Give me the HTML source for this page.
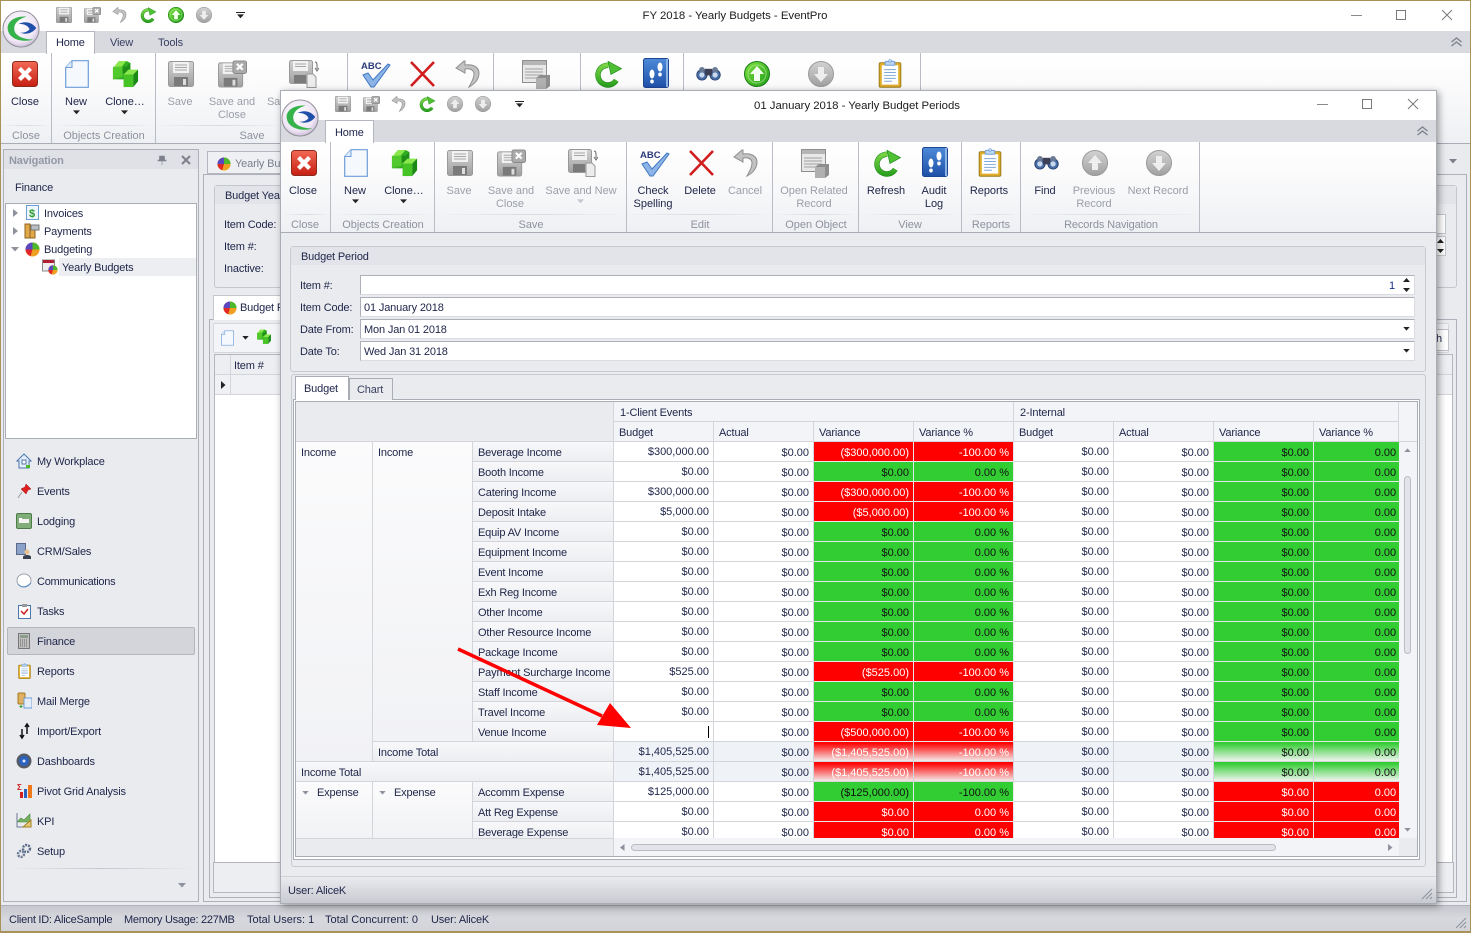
<!DOCTYPE html>
<html><head><meta charset="utf-8"><title>EventPro</title>
<style>
html,body{margin:0;padding:0}
body{width:1471px;height:933px;overflow:hidden;position:relative;background:#e9ebef;font:11px/14px "Liberation Sans",sans-serif;color:#1e2448;letter-spacing:-.15px}
div,svg{position:absolute;box-sizing:border-box}
.t{white-space:nowrap;margin-top:1px}
.c{white-space:nowrap;transform:translateX(-50%);text-align:center;margin-top:1px;letter-spacing:-.03px}
.d{color:#9b9ea9}
.g{color:#8e929e}
.sep{width:1px;background:#b9bcc5}
.rib{background:linear-gradient(#fff 0,#fbfbfc 35%,#eef0f3 100%);border-bottom:1px solid #a9adb6}
.strip{background:#d8dae0}
.box{background:#fff;border:1px solid #adb0b9;border-bottom-color:#dadce1;border-right-color:#dadce1}
.shade{height:1px;background:linear-gradient(90deg,#eef0f3,#d8dae0,#eef0f3)}
table{border-collapse:separate;border-spacing:0;table-layout:fixed;width:1118px;position:absolute;left:0;top:0}
td{height:20px;padding:3px 4px 0;box-sizing:border-box;border-right:1px solid #d3d5da;border-bottom:1px solid #d3d5da;text-align:right;background:#fff;white-space:nowrap;overflow:hidden;line-height:16px;color:#1e2448;letter-spacing:0;vertical-align:top}
td.l{text-align:left;padding-left:5px;background:linear-gradient(#f8f8fa,#eceef1);letter-spacing:-.17px}
td.big{text-align:left;padding-left:5px;background:linear-gradient(#fbfbfc,#f1f2f5);letter-spacing:-.17px}
td.n{line-height:17px;padding-top:2px}
td.s{background:#eff3f8}
td.G{background:#32cd32;color:#111;border-color:#e6e8ec}
td.R{background:#f00;color:#fff;border-color:#e6e8ec}
td.GT{background:linear-gradient(#32cd32 5%,#f0f4f0 100%);color:#111}
td.RT{background:linear-gradient(#f00 5%,#f4eaea 100%);color:#fff}
.hd{background:#f3f4f7;border-right:1px solid #d3d5da;border-bottom:1px solid #d3d5da;padding:4px 0 0 5px;white-space:nowrap}
</style></head><body>
<svg width="0" height="0" style="left:0;top:0"><defs>
<linearGradient id="rg" x1="0" y1="0" x2="0" y2="1"><stop offset="0" stop-color="#f26a55"/><stop offset="1" stop-color="#c61e12"/></linearGradient>
<linearGradient id="gg" x1="0" y1="0" x2="1" y2="1"><stop offset="0" stop-color="#7fe23e"/><stop offset="1" stop-color="#1e9e1a"/></linearGradient>
<linearGradient id="rf" gradientUnits="userSpaceOnUse" x1="0" y1="0" x2="0" y2="28"><stop offset="0" stop-color="#8ade4e"/><stop offset="1" stop-color="#259c1c"/></linearGradient>
<linearGradient id="grayg" x1="0" y1="0" x2="0" y2="1"><stop offset="0" stop-color="#d2d2d2"/><stop offset="1" stop-color="#a0a0a0"/></linearGradient>
<linearGradient id="blg" x1="0" y1="0" x2="0" y2="1"><stop offset="0" stop-color="#4d8ad8"/><stop offset="1" stop-color="#1f50a8"/></linearGradient>
<radialGradient id="lg" cx=".45" cy=".4" r=".7"><stop offset="0" stop-color="#fff"/><stop offset=".65" stop-color="#efe6f5"/><stop offset="1" stop-color="#b7a6c8"/></radialGradient>
<symbol id="logo" viewBox="0 0 40 40"><circle cx="20" cy="20" r="19" fill="url(#lg)" stroke="#8a8a90"/><path d="M26 7C14 6 5 12 6 20 7 30 20 35 33 31 24 31 14 28 13 21 12 14 18 9 26 7z" fill="#35b24a"/><path d="M17 15C24 11 32 13 36 19 32 25 25 26 19 24 25 24 28 22 29 20 27 16 22 14 17 15z" fill="#1f4fa8"/></symbol>
<symbol id="close" viewBox="0 0 26 26"><rect x=".5" y=".5" width="25" height="25" rx="3" fill="url(#rg)" stroke="#8e2a1c"/><path d="M7.500 7.500l11 11M18.500 7.500l-11 11" stroke="#fff" stroke-width="4.200" fill="none"/></symbol>
<symbol id="new" viewBox="0 0 24 28"><path d="M7 .7h16.300v26.600H.7V7.500z" fill="#f5f9fe" stroke="#6d9dd6" stroke-width="1.200"/><path d="M7 .7v6.800H.7" fill="#dfeafa" stroke="#6d9dd6"/></symbol>
<symbol id="clone" viewBox="0 0 30 30"><path d="M2 8l7-2 6 2v12H2z" fill="url(#gg)"/><path d="M8 1h8l4 2v11H8z" fill="#2fae21"/><path d="M3 7l5-6h8l-5 6z" fill="#8be84c"/><path d="M11 7h5l4-4v11h-9z" fill="#1f8e18"/><rect x="2" y="7" width="10" height="11" fill="#52c92c"/><rect x="13" y="15" width="10" height="13" fill="#46c426"/><path d="M13 15l5-5h10l-5 5z" fill="#8be84c"/><path d="M23 15l5-5v12l-5 6z" fill="#1b8a15"/></symbol>
<symbol id="save" viewBox="0 0 26 26"><rect x=".5" y=".5" width="25" height="25" rx="2" fill="url(#grayg)" stroke="#999"/><rect x="5" y="1" width="16" height="11" fill="#f2f2f2"/><path d="M7 4h12M7 6.500h12M7 9h12" stroke="#a5a5a5"/><rect x="6" y="16" width="14" height="9" fill="#7a7a7a"/><rect x="15" y="18" width="3" height="6" fill="#ddd"/></symbol>
<symbol id="saveclose" viewBox="0 0 30 28"><rect x=".5" y="2.500" width="25" height="25" rx="2" fill="url(#grayg)" stroke="#999"/><rect x="5" y="3" width="14" height="11" fill="#f2f2f2"/><path d="M7 6h10M7 8.500h10M7 11h10" stroke="#a5a5a5"/><rect x="6" y="18" width="14" height="9" fill="#7a7a7a"/><rect x="15" y="20" width="3" height="6" fill="#ddd"/><rect x="15.500" y=".5" width="14" height="13" rx="2" fill="#aaa" stroke="#888"/><path d="M19.500 3.500l6 6M25.500 3.500l-6 6" stroke="#fff" stroke-width="2.200"/></symbol>
<symbol id="savenew" viewBox="0 0 30 28"><rect x=".5" y=".5" width="23" height="23" rx="2" fill="url(#grayg)" stroke="#999"/><rect x="4" y="1" width="15" height="10" fill="#f2f2f2"/><path d="M6 4h11M6 6.500h11" stroke="#a5a5a5"/><rect x="5" y="15" width="12" height="8" fill="#7a7a7a"/><path d="M18 14h6l3 3v10.500h-9z" fill="#ececec" stroke="#999"/><path d="M26 2c2 0 2 2 2 4v3m-2-1l2 3 2-3" stroke="#666" fill="none"/></symbol>
<symbol id="abc" viewBox="0 0 30 28"><text x="0" y="9" font-family="Liberation Sans" font-weight="700" font-size="9.500" fill="#2a3a78" letter-spacing="0">ABC</text><path d="M2 15l5-2 5 7L27 4l2 1-16 22h-3z" fill="#8db4e6" stroke="#3f78c4"/></symbol>
<symbol id="x" viewBox="0 0 27 26"><path d="M2 1l23 24M25 1L2 25" stroke="#d11d1d" stroke-width="2.600" fill="none"/></symbol>
<symbol id="undo" viewBox="0 0 25 28"><path d="M9 1L1 8l9 5V9c5-1 9 1 9 5 0 5-3 9-5 13 6-3 10-8 10-14 0-6-6-9-14-8V1z" fill="#c2c2c2" stroke="#8f8f8f"/></symbol>
<symbol id="related" viewBox="0 0 28 29"><rect x=".5" y=".5" width="24" height="22" fill="#e8e8e8" stroke="#8f8f8f"/><rect x="1" y="1" width="23" height="4" fill="#b5b5b5"/><path d="M3 9h18M3 12h18M3 15h18M3 18h12" stroke="#a0a0a0"/><path d="M14 18l4-3h10v11l-4 3H14z" fill="#8e8e8e"/><path d="M14 18h10v11H14z" fill="#b0b0b0"/></symbol>
<symbol id="refresh" viewBox="0 0 30 28"><path d="M23 20.500A10.200 10.200 0 1 1 15 5" stroke="#1d8a18" stroke-width="5.600" fill="none"/><path d="M23 20.500A10.200 10.200 0 1 1 15 5" stroke="url(#rf)" stroke-width="4.400" fill="none"/><path d="M14.500 .8L28.500 8.500 17.500 14.500z" fill="#4fc034" stroke="#1d8a18" stroke-width=".7"/></symbol>
<symbol id="audit" viewBox="0 0 26 30"><rect x=".5" y=".5" width="25" height="29" rx="2" fill="url(#blg)" stroke="#1c4694"/><rect x="23" y="1" width="2" height="28" fill="#8db4e6"/><ellipse cx="9" cy="16" rx="2.500" ry="4.500" fill="#fff"/><ellipse cx="9" cy="23.500" rx="1.800" ry="2" fill="#fff"/><ellipse cx="17" cy="9" rx="2.500" ry="4.500" fill="#fff"/><ellipse cx="17" cy="16.500" rx="1.800" ry="2" fill="#fff"/></symbol>
<symbol id="reports" viewBox="0 0 24 30"><rect x=".8" y="3.800" width="22.400" height="25.400" rx="1.500" fill="#e0ac2a" stroke="#9a7a18"/><rect x="3.500" y="6.500" width="17" height="20" fill="#fff"/><path d="M6 11h12M6 14h12M6 17h12M6 20h12M6 23h8" stroke="#7fa6d8"/><rect x="7" y="2.500" width="10" height="4" rx="1" fill="#bcd5f0" stroke="#6d9dd6"/><circle cx="12" cy="2" r="1.500" fill="#bcd5f0" stroke="#6d9dd6" stroke-width=".6"/></symbol>
<symbol id="find" viewBox="0 0 26 16"><circle cx="6" cy="9.500" r="5.500" fill="#4a6fa8" stroke="#27406e"/><circle cx="20" cy="9.500" r="5.500" fill="#4a6fa8" stroke="#27406e"/><circle cx="6" cy="9.500" r="2.800" fill="#c8d9ef"/><circle cx="20" cy="9.500" r="2.800" fill="#c8d9ef"/><rect x="9" y="3" width="8" height="7" fill="#3c3f55"/><circle cx="6" cy="4" r="3" fill="#6a7a94"/><circle cx="20" cy="4" r="3" fill="#6a7a94"/></symbol>
<symbol id="upG" viewBox="0 0 26 26"><circle cx="13" cy="13" r="12.500" fill="url(#grayg)" stroke="#999"/><path d="M13 5l7 8h-4v7h-6v-7H6z" fill="#eee"/></symbol>
<symbol id="downG" viewBox="0 0 26 26"><circle cx="13" cy="13" r="12.500" fill="url(#grayg)" stroke="#999"/><path d="M13 21l7-8h-4V6h-6v7H6z" fill="#eee"/></symbol>
<symbol id="upC" viewBox="0 0 26 26"><circle cx="13" cy="13" r="12.500" fill="url(#gg)" stroke="#1b7a18"/><circle cx="13" cy="13" r="9" fill="none" stroke="#d2f5c0" stroke-opacity=".5"/><path d="M13 5l7 8h-4v7h-6v-7H6z" fill="#f3fff0"/></symbol>
<symbol id="pie" viewBox="0 0 16 16"><circle cx="8" cy="8" r="7.500" fill="#f0a020"/><path d="M8 8V.5a7.500 7.500 0 0 1 7.500 7.500z" fill="#4cb82c"/><path d="M8 8H.5A7.500 7.500 0 0 1 8 .5z" fill="#5a48c0"/><path d="M8 8H.5A7.500 7.500 0 0 0 6 15z" fill="#e02828"/></symbol>
<symbol id="dd" viewBox="0 0 8 5"><path d="M0 0h8L4 4.500z" fill="currentColor"/></symbol>
</defs></svg>

<!-- main window -->
<div style="left:0;top:0;width:1471px;height:933px;border:1px solid #a8925a;border-bottom:2px solid #a8925a;background:#e9ebef"></div>
<div style="left:1px;top:1px;width:1469px;height:30px;background:#fff"></div>
<div class="strip" style="left:1px;top:31px;width:1469px;height:22px"></div>
<div class="rib" style="left:1px;top:53px;width:1469px;height:91px"></div>
<div style="left:46px;top:31px;width:49px;height:23px;background:#fff;border:1px solid #b4b7bf;border-bottom:0"></div>
<div class="t" style="left:56px;top:35px">Home</div>
<div class="t" style="left:110px;top:35px;color:#3a4060">View</div>
<div class="t" style="left:158px;top:35px;color:#3a4060">Tools</div>
<svg style="left:2px;top:10px" width="38" height="38"><use href="#logo"/></svg>
<svg style="left:56px;top:7px" width="16" height="16"><use href="#save"/></svg>
<svg style="left:84px;top:7px" width="17" height="16"><use href="#saveclose"/></svg>
<svg style="left:112px;top:7px" width="15" height="16"><use href="#undo"/></svg>
<svg style="left:140px;top:7px" width="17" height="16"><use href="#refresh"/></svg>
<svg style="left:168px;top:7px" width="16" height="16"><use href="#upC"/></svg>
<svg style="left:196px;top:7px" width="16" height="16"><use href="#downG"/></svg>
<div style="left:236px;top:12px;width:9px;height:1px;background:#222"></div>
<svg style="left:237px;top:14px;color:#222" width="7" height="5"><use href="#dd"/></svg>
<div class="c" style="left:735px;top:8px;font-size:11.4px;color:#1c1c1c">FY 2018 - Yearly Budgets - EventPro</div>
<div style="left:1351px;top:15px;width:11px;height:1px;background:#8a8a8a"></div>
<div style="left:1396px;top:10px;width:10px;height:10px;border:1px solid #7a7a7a"></div>
<svg style="left:1441px;top:9px" width="12" height="12"><path d="M1 1l10 10M11 1L1 11" stroke="#7a7a7a" fill="none"/></svg>
<svg style="left:1450px;top:37px" width="13" height="10"><path d="M1.500 5L6.500 1l5 4M1.500 9l5-4 5 4" stroke="#7d808a" stroke-width="1.300" fill="none"/></svg>
<div class="sep" style="left:51px;top:53px;height:90px"></div>
<div class="sep" style="left:155px;top:53px;height:90px"></div>
<div class="sep" style="left:347px;top:53px;height:37px"></div>
<div class="sep" style="left:493px;top:53px;height:37px"></div>
<div class="sep" style="left:580px;top:53px;height:37px"></div>
<div class="sep" style="left:683px;top:53px;height:37px"></div>
<div class="sep" style="left:920px;top:53px;height:37px"></div>
<svg style="left:12px;top:61px" width="26" height="26"><use href="#close"/></svg>
<svg style="left:65px;top:60px" width="24" height="28"><use href="#new"/></svg>
<svg style="left:111px;top:60px" width="29" height="29"><use href="#clone"/></svg>
<svg style="left:168px;top:61px" width="26" height="26"><use href="#save"/></svg>
<svg style="left:218px;top:60px" width="29" height="28"><use href="#saveclose"/></svg>
<svg style="left:289px;top:60px" width="30" height="28"><use href="#savenew"/></svg>
<svg style="left:361px;top:60px" width="30" height="28"><use href="#abc"/></svg>
<svg style="left:409px;top:61px" width="27" height="26"><use href="#x"/></svg>
<svg style="left:455px;top:60px" width="25" height="28"><use href="#undo"/></svg>
<svg style="left:522px;top:60px" width="28" height="29"><use href="#related"/></svg>
<svg style="left:594px;top:60px" width="29" height="28"><use href="#refresh"/></svg>
<svg style="left:643px;top:58px" width="26" height="30"><use href="#audit"/></svg>
<svg style="left:696px;top:66px" width="25" height="15"><use href="#find"/></svg>
<svg style="left:744px;top:61px" width="26" height="26"><use href="#upC"/></svg>
<svg style="left:808px;top:61px" width="26" height="26"><use href="#downG"/></svg>
<svg style="left:878px;top:59px" width="24" height="29"><use href="#reports"/></svg>
<div class="c" style="left:25px;top:94px">Close</div>
<div class="c" style="left:76px;top:94px">New</div>
<svg style="left:73px;top:110px;color:#222" width="7" height="5"><use href="#dd"/></svg>
<div class="c" style="left:125px;top:94px">Clone…</div>
<svg style="left:121px;top:110px;color:#222" width="7" height="5"><use href="#dd"/></svg>
<div class="c d" style="left:180px;top:94px">Save</div>
<div class="c d" style="left:232px;top:94px">Save and</div>
<div class="c d" style="left:232px;top:107px">Close</div>
<div class="t d" style="left:267px;top:94px">Sa</div>
<div class="c g" style="left:26px;top:128px">Close</div>
<div class="c g" style="left:104px;top:128px">Objects Creation</div>
<div class="c g" style="left:252px;top:128px">Save</div>
<div class="shade" style="left:5px;top:125px;width:42px"></div>
<div class="shade" style="left:60px;top:125px;width:90px"></div>
<div class="shade" style="left:160px;top:125px;width:118px"></div>

<!-- navigation -->
<div style="left:3px;top:149px;width:196px;height:753px;border:1px solid #aeb1ba;background:#e9ebef"></div>
<div style="left:4px;top:150px;width:194px;height:19px;background:#dfe1e6"></div>
<div class="t" style="left:9px;top:153px;font-weight:700;color:#9498a5">Navigation</div>
<svg style="left:157px;top:155px" width="10" height="10"><path d="M2.500 1h5v4h1.500v1H1V5h1.500zM5 6v4" fill="#7d808a" stroke="#7d808a" stroke-width=".6"/></svg>
<svg style="left:181px;top:155px" width="10" height="10"><path d="M1 1l8 8M9 1L1 9" stroke="#7d808a" stroke-width="2" fill="none"/></svg>
<div class="t" style="left:15px;top:180px">Finance</div>
<div style="left:5px;top:203px;width:192px;height:236px;background:#fff;border:1px solid #a9adb6"></div>
<div style="left:59px;top:258px;width:137px;height:18px;background:#eceef1"></div>
<svg style="left:13px;top:209px" width="6" height="8"><path d="M0 0l5 4-5 4z" fill="#8e929e"/></svg>
<svg style="left:13px;top:227px" width="6" height="8"><path d="M0 0l5 4-5 4z" fill="#8e929e"/></svg>
<svg style="left:11px;top:247px;color:#8e929e" width="8" height="5"><use href="#dd"/></svg>
<svg style="left:26px;top:205px" width="13" height="15"><rect x=".5" y=".5" width="12" height="14" fill="#eef6fe" stroke="#6d9dd6"/><text x="3" y="12" font-family="Liberation Sans" font-size="11" font-weight="700" fill="#2a9a2a">$</text></svg>
<svg style="left:24px;top:223px" width="16" height="16"><rect x="1" y="1" width="5" height="14" fill="#e0a848" stroke="#8f6420"/><rect x="6" y="7" width="5" height="8" fill="#e0a848" stroke="#8f6420"/><rect x="7" y="2" width="8" height="5" fill="#b9bcc5" stroke="#777"/></svg>
<svg style="left:25px;top:242px" width="15" height="15"><use href="#pie"/></svg>
<svg style="left:42px;top:259px" width="16" height="16"><rect x=".5" y="1" width="12" height="11" fill="#eee" stroke="#888"/><rect x="1" y="1" width="11" height="3" fill="#b02030"/><g transform="translate(6 6) scale(.62)"><use href="#pie" width="16" height="16"/></g></svg>
<div class="t" style="left:44px;top:206px">Invoices</div>
<div class="t" style="left:44px;top:224px">Payments</div>
<div class="t" style="left:44px;top:242px">Budgeting</div>
<div class="t" style="left:62px;top:260px">Yearly Budgets</div>

<div style="left:7px;top:627px;width:188px;height:28px;background:#d3d5da;border:1px solid #b3b6bd;border-radius:2px"></div>
<div class="t" style="left:37px;top:454px">My Workplace</div>
<div class="t" style="left:37px;top:484px">Events</div>
<div class="t" style="left:37px;top:514px">Lodging</div>
<div class="t" style="left:37px;top:544px">CRM/Sales</div>
<div class="t" style="left:37px;top:574px;letter-spacing:-.25px">Communications</div>
<div class="t" style="left:37px;top:604px">Tasks</div>
<div class="t" style="left:37px;top:634px">Finance</div>
<div class="t" style="left:37px;top:664px">Reports</div>
<div class="t" style="left:37px;top:694px">Mail Merge</div>
<div class="t" style="left:37px;top:724px">Import/Export</div>
<div class="t" style="left:37px;top:754px">Dashboards</div>
<div class="t" style="left:37px;top:784px">Pivot Grid Analysis</div>
<div class="t" style="left:37px;top:814px">KPI</div>
<div class="t" style="left:37px;top:844px">Setup</div>
<svg style="left:16px;top:453px" width="16" height="16"><path d="M8 1L1 8h2v7h10V8h2z" fill="#e6eefa" stroke="#4a76b0"/><rect x="6" y="7" width="4" height="4" fill="#fff" stroke="#4a76b0"/><rect x="10" y="12" width="4" height="3" fill="#4cb82c"/></svg>
<svg style="left:17px;top:483px" width="15" height="16"><path d="M9 1l5 5-3 1-2 4-5-5 4-2z" fill="#e02020" stroke="#a01010" stroke-width=".5"/><path d="M5 9l-4 6" stroke="#999"/></svg>
<svg style="left:16px;top:513px" width="16" height="16"><rect x=".5" y=".5" width="15" height="15" rx="1.500" fill="#7fae7a" stroke="#4e7a4a"/><rect x="3" y="6" width="10" height="4" fill="#f2f2f2"/><rect x="3" y="5" width="3" height="2" fill="#fff"/></svg>
<svg style="left:16px;top:543px" width="16" height="16"><rect x=".5" y=".5" width="9" height="11" fill="#8aa2c8" stroke="#5a6a88"/><circle cx="11" cy="9" r="2.500" fill="#e8c090"/><path d="M7 16v-2c0-1.500 2-2 4-2s4 .5 4 2v2z" fill="#3a4050"/></svg>
<svg style="left:16px;top:573px" width="16" height="16"><ellipse cx="8" cy="7.500" rx="7" ry="6.500" fill="#fff" stroke="#a0a4b0"/><path d="M2 11c3 4 8 4 13-1" stroke="#5a8ac8" fill="none"/></svg>
<svg style="left:18px;top:603px" width="13" height="16"><rect x=".5" y="2.500" width="12" height="13" fill="#fff" stroke="#4a76b0"/><rect x="4" y="1" width="5" height="3" fill="#999"/><path d="M3 8l3 3 4-5" stroke="#d02020" stroke-width="1.500" fill="none"/></svg>
<svg style="left:18px;top:633px" width="12" height="16"><rect x=".5" y=".5" width="11" height="15" fill="#c0c0c0" stroke="#777"/><rect x="2" y="2" width="8" height="3" fill="#8aa08a"/><path d="M2 7h8M2 9h8M2 11h8M2 13h8" stroke="#666" stroke-dasharray="1 1"/></svg>
<svg style="left:18px;top:663px" width="13" height="16"><use href="#reports"/></svg>
<svg style="left:17px;top:692px" width="15" height="17"><rect x="1" y="1" width="7" height="11" rx="1" fill="#e0b060" stroke="#a07820"/><rect x="7" y="6" width="8" height="10" fill="#e6eefa" stroke="#6d9dd6"/><path d="M4 13v3M2.500 14.500h3" stroke="#2a9a2a"/></svg>
<svg style="left:18px;top:722px" width="13" height="18"><path d="M4 7v9M2 13l2 3 2-3" stroke="#111" stroke-width="1.500" fill="none"/><path d="M9 12V2M7 5l2-3 2 3" stroke="#111" stroke-width="1.500" fill="none"/></svg>
<svg style="left:16px;top:753px" width="16" height="16"><circle cx="8" cy="8" r="7.500" fill="#555a66"/><circle cx="8" cy="8" r="5" fill="#2a62c0"/><circle cx="8" cy="8" r="1.500" fill="#e0e8f8"/></svg>
<svg style="left:17px;top:783px" width="15" height="16"><text x="0" y="7" font-family="Liberation Sans" font-size="8" font-weight="700" fill="#d02020">Σ</text><rect x="3" y="9" width="3" height="6" fill="#d02020"/><rect x="7" y="6" width="3" height="9" fill="#2a62c0"/><rect x="11" y="2" width="4" height="13" fill="#f07818"/></svg>
<svg style="left:16px;top:812px" width="16" height="16"><path d="M1 1v14h14" stroke="#6a7a94" fill="none"/><path d="M2 9l3-3 3 2 6-6v8H2z" fill="#7ab060" stroke="#3a8a3a" stroke-width=".6"/><path d="M15 8v7H7z" fill="#e8c878" stroke="#a08020"/></svg>
<svg style="left:16px;top:843px" width="16" height="16"><circle cx="10.500" cy="5.500" r="3.500" fill="none" stroke="#5a6a88" stroke-width="2.400" stroke-dasharray="2 1"/><circle cx="5" cy="11" r="3" fill="none" stroke="#6a7a94" stroke-width="2.400" stroke-dasharray="2 1"/></svg>
<div class="shade" style="left:8px;top:868px;width:186px;background:linear-gradient(90deg,#e9ebef,#c4c7ce,#e9ebef)"></div>
<svg style="left:178px;top:883px;color:#8e929e" width="8" height="5"><use href="#dd"/></svg>

<!-- background document -->
<div style="left:207px;top:151px;width:80px;height:23px;background:#eef0f3;border:1px solid #b4b7bf"></div>
<svg style="left:217px;top:157px" width="14" height="14"><use href="#pie"/></svg>
<div class="t d" style="left:235px;top:156px;color:#7a7e8c">Yearly Bu</div>
<div style="left:203px;top:174px;width:1264px;height:728px;border:1px solid #aeb1ba;background:#e9ebef"></div>
<svg style="left:1449px;top:159px;color:#7d808a" width="8" height="5"><use href="#dd"/></svg>
<div style="left:214px;top:185px;width:1243px;height:103px;border:1px solid #c4c7ce;border-radius:3px"></div>
<div style="left:215px;top:186px;width:1241px;height:18px;background:#e2e4e9"></div>
<div class="t" style="left:225px;top:188px">Budget Yea</div>
<div class="t" style="left:224px;top:217px">Item Code:</div>
<div class="t" style="left:224px;top:239px">Item #:</div>
<div class="t" style="left:224px;top:261px">Inactive:</div>
<div style="left:1400px;top:214px;width:46px;height:20px;background:#fff;border:1px solid #c4c7ce"></div>
<div style="left:1400px;top:236px;width:46px;height:20px;background:#fff;border:1px solid #c4c7ce"></div>
<svg style="left:1437px;top:239px" width="7" height="14"><path d="M3.500 0L7 4H0zM0 10h7l-3.500 4z" fill="#222"/></svg>
<div style="left:209px;top:319px;width:1248px;height:579px;border:1px solid #aeb1ba"></div>
<div style="left:213px;top:295px;width:75px;height:25px;background:#fff;border:1px solid #c4c7ce;border-bottom:0"></div>
<svg style="left:223px;top:301px" width="14" height="14"><use href="#pie"/></svg>
<div class="t" style="left:240px;top:300px">Budget F</div>
<div style="left:213px;top:323px;width:1236px;height:30px;background:#f3f4f7;border:1px solid #d5d7dc;border-radius:2px"></div>
<svg style="left:221px;top:330px" width="13" height="16"><use href="#new"/></svg>
<svg style="left:242px;top:336px;color:#222" width="7" height="4"><use href="#dd"/></svg>
<svg style="left:256px;top:329px" width="16" height="16"><use href="#clone"/></svg>
<div style="left:1436px;top:329px;width:13px;height:22px;background:#fff;border:1px solid #bfc2c9;border-left:0"></div>
<div class="t" style="left:1436px;top:331px">h</div>
<div style="left:214px;top:354px;width:1239px;height:509px;border:1px solid #b4b7bf;background:#fff"></div>
<div style="left:215px;top:355px;width:1237px;height:20px;background:#eceef1;border-bottom:1px solid #d3d5da"></div>
<div style="left:215px;top:375px;width:1237px;height:20px;background:#f0f1f4;border-bottom:1px solid #d3d5da"></div>
<div style="left:230px;top:355px;width:1px;height:40px;background:#d3d5da"></div>
<div class="t" style="left:234px;top:358px">Item #</div>
<svg style="left:221px;top:381px" width="5" height="8"><path d="M0 0l4.500 4L0 8z" fill="#222"/></svg>
<div style="left:213px;top:862px;width:1241px;height:31px;background:#eceef1;border:1px solid #b4b7bf"></div>

<!-- main status bar -->
<div style="left:1px;top:905px;width:1469px;height:26px;background:linear-gradient(#c6c8ce,#d6d8dd 50%,#d2d4d9);border-top:1px solid #b0b3bb"></div>
<div class="t" style="left:9px;top:912px;letter-spacing:-.25px">Client ID: AliceSample</div>
<div class="t" style="left:124px;top:912px;letter-spacing:-.26px">Memory Usage: 227MB</div>
<div class="t" style="left:247px;top:912px;letter-spacing:0">Total Users: 1</div>
<div class="t" style="left:325px;top:912px;letter-spacing:0">Total Concurrent: 0</div>
<div class="t" style="left:431px;top:912px">User: AliceK</div>
<svg style="left:1455px;top:917px" width="12" height="12"><path d="M1 11L11 1M5 11l6-6M9 11l2-2" stroke="#8e929e" fill="none"/></svg>

<!-- inner window -->
<div style="left:280px;top:90px;width:1157px;height:814px;background:#e9ebef;border:1px solid #a9adb6;box-shadow:2px 2px 7px rgba(0,0,0,.38)"></div>
<div style="left:281px;top:91px;width:1155px;height:29px;background:#fff"></div>
<div class="strip" style="left:281px;top:120px;width:1155px;height:22px"></div>
<div class="rib" style="left:281px;top:142px;width:1155px;height:91px"></div>
<div style="left:325px;top:120px;width:49px;height:23px;background:#fff;border:1px solid #b4b7bf;border-bottom:0"></div>
<div class="t" style="left:335px;top:125px">Home</div>
<svg style="left:281px;top:99px" width="38" height="38"><use href="#logo"/></svg>
<svg style="left:335px;top:96px" width="16" height="16"><use href="#save"/></svg>
<svg style="left:363px;top:96px" width="17" height="16"><use href="#saveclose"/></svg>
<svg style="left:391px;top:96px" width="15" height="16"><use href="#undo"/></svg>
<svg style="left:419px;top:96px" width="17" height="16"><use href="#refresh"/></svg>
<svg style="left:447px;top:96px" width="16" height="16"><use href="#upG"/></svg>
<svg style="left:475px;top:96px" width="16" height="16"><use href="#downG"/></svg>
<div style="left:515px;top:101px;width:9px;height:1px;background:#222"></div>
<svg style="left:516px;top:103px;color:#222" width="7" height="5"><use href="#dd"/></svg>
<div class="c" style="left:857px;top:98px;font-size:11.4px;color:#1c1c1c">01 January 2018 - Yearly Budget Periods</div>
<div style="left:1317px;top:104px;width:11px;height:1px;background:#8a8a8a"></div>
<div style="left:1362px;top:99px;width:10px;height:10px;border:1px solid #7a7a7a"></div>
<svg style="left:1407px;top:98px" width="12" height="12"><path d="M1 1l10 10M11 1L1 11" stroke="#7a7a7a" fill="none"/></svg>
<svg style="left:1416px;top:126px" width="13" height="10"><path d="M1.500 5L6.500 1l5 4M1.500 9l5-4 5 4" stroke="#7d808a" stroke-width="1.300" fill="none"/></svg>
<div class="sep" style="left:330px;top:142px;height:90px"></div>
<div class="sep" style="left:434px;top:142px;height:90px"></div>
<div class="sep" style="left:626px;top:142px;height:90px"></div>
<div class="sep" style="left:772px;top:142px;height:90px"></div>
<div class="sep" style="left:858px;top:142px;height:90px"></div>
<div class="sep" style="left:961px;top:142px;height:90px"></div>
<div class="sep" style="left:1020px;top:142px;height:90px"></div>
<div class="sep" style="left:1199px;top:142px;height:90px"></div>
<svg style="left:291px;top:150px" width="26" height="26"><use href="#close"/></svg>
<svg style="left:344px;top:149px" width="24" height="28"><use href="#new"/></svg>
<svg style="left:390px;top:149px" width="29" height="29"><use href="#clone"/></svg>
<svg style="left:447px;top:150px" width="26" height="26"><use href="#save"/></svg>
<svg style="left:497px;top:149px" width="29" height="28"><use href="#saveclose"/></svg>
<svg style="left:568px;top:149px" width="30" height="28"><use href="#savenew"/></svg>
<svg style="left:640px;top:149px" width="30" height="28"><use href="#abc"/></svg>
<svg style="left:688px;top:150px" width="27" height="26"><use href="#x"/></svg>
<svg style="left:733px;top:149px" width="25" height="28"><use href="#undo"/></svg>
<svg style="left:801px;top:149px" width="28" height="29"><use href="#related"/></svg>
<svg style="left:873px;top:149px" width="29" height="28"><use href="#refresh"/></svg>
<svg style="left:922px;top:147px" width="26" height="30"><use href="#audit"/></svg>
<svg style="left:978px;top:148px" width="24" height="29"><use href="#reports"/></svg>
<svg style="left:1034px;top:155px" width="25" height="15"><use href="#find"/></svg>
<svg style="left:1082px;top:150px" width="26" height="26"><use href="#upG"/></svg>
<svg style="left:1146px;top:150px" width="26" height="26"><use href="#downG"/></svg>
<div class="c" style="left:303px;top:183px">Close</div>
<div class="c" style="left:355px;top:183px">New</div>
<svg style="left:352px;top:199px;color:#222" width="7" height="5"><use href="#dd"/></svg>
<div class="c" style="left:404px;top:183px">Clone…</div>
<svg style="left:400px;top:199px;color:#222" width="7" height="5"><use href="#dd"/></svg>
<div class="c d" style="left:459px;top:183px">Save</div>
<div class="c d" style="left:511px;top:183px">Save and</div>
<div class="c d" style="left:510px;top:196px">Close</div>
<div class="c d" style="left:581px;top:183px">Save and New</div>
<svg style="left:577px;top:199px;color:#c4c7ce" width="7" height="5"><use href="#dd"/></svg>
<div class="c" style="left:653px;top:183px">Check</div>
<div class="c" style="left:653px;top:196px">Spelling</div>
<div class="c" style="left:700px;top:183px">Delete</div>
<div class="c d" style="left:745px;top:183px">Cancel</div>
<div class="c d" style="left:814px;top:183px">Open Related</div>
<div class="c d" style="left:814px;top:196px">Record</div>
<div class="c" style="left:886px;top:183px">Refresh</div>
<div class="c" style="left:934px;top:183px">Audit</div>
<div class="c" style="left:934px;top:196px">Log</div>
<div class="c" style="left:989px;top:183px">Reports</div>
<div class="c" style="left:1045px;top:183px">Find</div>
<div class="c d" style="left:1094px;top:183px">Previous</div>
<div class="c d" style="left:1094px;top:196px">Record</div>
<div class="c d" style="left:1158px;top:183px">Next Record</div>
<div class="c g" style="left:305px;top:217px">Close</div>
<div class="c g" style="left:383px;top:217px">Objects Creation</div>
<div class="c g" style="left:531px;top:217px">Save</div>
<div class="c g" style="left:700px;top:217px">Edit</div>
<div class="c g" style="left:816px;top:217px">Open Object</div>
<div class="c g" style="left:910px;top:217px">View</div>
<div class="c g" style="left:991px;top:217px">Reports</div>
<div class="c g" style="left:1111px;top:217px;letter-spacing:-.12px">Records Navigation</div>
<div class="shade" style="left:285px;top:214px;width:42px"></div>
<div class="shade" style="left:339px;top:214px;width:90px"></div>
<div class="shade" style="left:445px;top:214px;width:175px"></div>
<div class="shade" style="left:632px;top:214px;width:135px"></div>
<div class="shade" style="left:778px;top:214px;width:76px"></div>
<div class="shade" style="left:866px;top:214px;width:90px"></div>
<div class="shade" style="left:967px;top:214px;width:48px"></div>
<div class="shade" style="left:1028px;top:214px;width:165px"></div>

<!-- budget period -->
<div style="left:290px;top:246px;width:1136px;height:126px;border:1px solid #c8cad0;border-radius:3px"></div>
<div style="left:291px;top:247px;width:1134px;height:18px;background:#e2e4e9"></div>
<div class="t" style="left:301px;top:249px">Budget Period</div>
<div class="t" style="left:300px;top:278px">Item #:</div>
<div class="t" style="left:300px;top:300px">Item Code:</div>
<div class="t" style="left:300px;top:322px">Date From:</div>
<div class="t" style="left:300px;top:344px">Date To:</div>
<div class="box" style="left:360px;top:275px;width:1055px;height:20px"></div>
<div class="box" style="left:360px;top:297px;width:1055px;height:20px"></div>
<div class="box" style="left:360px;top:319px;width:1055px;height:20px"></div>
<div class="box" style="left:360px;top:341px;width:1055px;height:20px"></div>
<div class="t" style="left:1389px;top:278px;color:#1b2f80">1</div>
<svg style="left:1403px;top:278px" width="7" height="14"><path d="M3.500 0L7 4H0zM0 10h7l-3.500 4z" fill="#222"/></svg>
<div class="t" style="left:364px;top:300px">01 January 2018</div>
<div class="t" style="left:364px;top:322px">Mon Jan 01 2018</div>
<div class="t" style="left:364px;top:344px">Wed Jan 31 2018</div>
<svg style="left:1403px;top:327px;color:#222" width="7" height="4"><use href="#dd"/></svg>
<svg style="left:1403px;top:349px;color:#222" width="7" height="4"><use href="#dd"/></svg>

<!-- tabs + grid -->
<div style="left:291px;top:374px;width:1135px;height:493px;border:1px solid #c8cad0;border-radius:3px"></div>
<div style="left:293px;top:399px;width:1127px;height:461px;border:1px solid #a9adb6;background:#fff"></div>
<div style="left:349px;top:378px;width:44px;height:22px;background:#e9ebef;border:1px solid #a9adb6;border-bottom:0"></div>
<div class="t" style="left:357px;top:382px;color:#3a4060">Chart</div>
<div style="left:295px;top:376px;width:54px;height:24px;background:#fff;border:1px solid #a9adb6;border-bottom:0"></div>
<div class="t" style="left:304px;top:381px">Budget</div>

<div style="left:295px;top:401px;width:1123px;height:456px;border:1px solid #a9adb6;background:#f3f4f7"></div>
<div style="left:296px;top:402px;width:318px;height:40px;background:#e9ebef;border-right:1px solid #d3d5da;border-bottom:1px solid #d3d5da"></div>
<div class="hd" style="left:614px;top:402px;width:400px;height:20px;padding-left:6px">1-Client Events</div>
<div class="hd" style="left:1014px;top:402px;width:385px;height:20px;padding-left:6px">2-Internal</div>
<div class="hd" style="left:614px;top:422px;width:100px;height:20px">Budget</div>
<div class="hd" style="left:714px;top:422px;width:100px;height:20px">Actual</div>
<div class="hd" style="left:814px;top:422px;width:100px;height:20px">Variance</div>
<div class="hd" style="left:914px;top:422px;width:100px;height:20px">Variance %</div>
<div class="hd" style="left:1014px;top:422px;width:100px;height:20px">Budget</div>
<div class="hd" style="left:1114px;top:422px;width:100px;height:20px">Actual</div>
<div class="hd" style="left:1214px;top:422px;width:100px;height:20px">Variance</div>
<div class="hd" style="left:1314px;top:422px;width:85px;height:20px">Variance %</div>
<div style="left:1399px;top:402px;width:18px;height:40px;border-bottom:1px solid #d3d5da"></div>

<div style="left:296px;top:442px;width:1103px;height:396px;overflow:hidden">
<table><colgroup><col style="width:77px"><col style="width:100px"><col style="width:141px"><col style="width:100px"><col style="width:100px"><col style="width:100px"><col style="width:100px"><col style="width:100px"><col style="width:100px"><col style="width:100px"><col style="width:100px"></colgroup>
<tr><td class="big" rowspan="16">Income</td><td class="big" rowspan="15">Income</td><td class="l">Beverage Income</td><td class="n">$300,000.00</td><td>$0.00</td><td class="R">($300,000.00)</td><td class="R">-100.00 %</td><td class="n">$0.00</td><td>$0.00</td><td class="G">$0.00</td><td class="G">0.00 %</td></tr>
<tr><td class="l">Booth Income</td><td class="n">$0.00</td><td>$0.00</td><td class="G">$0.00</td><td class="G">0.00 %</td><td class="n">$0.00</td><td>$0.00</td><td class="G">$0.00</td><td class="G">0.00 %</td></tr>
<tr><td class="l">Catering Income</td><td class="n">$300,000.00</td><td>$0.00</td><td class="R">($300,000.00)</td><td class="R">-100.00 %</td><td class="n">$0.00</td><td>$0.00</td><td class="G">$0.00</td><td class="G">0.00 %</td></tr>
<tr><td class="l">Deposit Intake</td><td class="n">$5,000.00</td><td>$0.00</td><td class="R">($5,000.00)</td><td class="R">-100.00 %</td><td class="n">$0.00</td><td>$0.00</td><td class="G">$0.00</td><td class="G">0.00 %</td></tr>
<tr><td class="l">Equip AV Income</td><td class="n">$0.00</td><td>$0.00</td><td class="G">$0.00</td><td class="G">0.00 %</td><td class="n">$0.00</td><td>$0.00</td><td class="G">$0.00</td><td class="G">0.00 %</td></tr>
<tr><td class="l">Equipment Income</td><td class="n">$0.00</td><td>$0.00</td><td class="G">$0.00</td><td class="G">0.00 %</td><td class="n">$0.00</td><td>$0.00</td><td class="G">$0.00</td><td class="G">0.00 %</td></tr>
<tr><td class="l">Event Income</td><td class="n">$0.00</td><td>$0.00</td><td class="G">$0.00</td><td class="G">0.00 %</td><td class="n">$0.00</td><td>$0.00</td><td class="G">$0.00</td><td class="G">0.00 %</td></tr>
<tr><td class="l">Exh Reg Income</td><td class="n">$0.00</td><td>$0.00</td><td class="G">$0.00</td><td class="G">0.00 %</td><td class="n">$0.00</td><td>$0.00</td><td class="G">$0.00</td><td class="G">0.00 %</td></tr>
<tr><td class="l">Other Income</td><td class="n">$0.00</td><td>$0.00</td><td class="G">$0.00</td><td class="G">0.00 %</td><td class="n">$0.00</td><td>$0.00</td><td class="G">$0.00</td><td class="G">0.00 %</td></tr>
<tr><td class="l">Other Resource Income</td><td class="n">$0.00</td><td>$0.00</td><td class="G">$0.00</td><td class="G">0.00 %</td><td class="n">$0.00</td><td>$0.00</td><td class="G">$0.00</td><td class="G">0.00 %</td></tr>
<tr><td class="l">Package Income</td><td class="n">$0.00</td><td>$0.00</td><td class="G">$0.00</td><td class="G">0.00 %</td><td class="n">$0.00</td><td>$0.00</td><td class="G">$0.00</td><td class="G">0.00 %</td></tr>
<tr><td class="l">Payment Surcharge Income</td><td class="n">$525.00</td><td>$0.00</td><td class="R">($525.00)</td><td class="R">-100.00 %</td><td class="n">$0.00</td><td>$0.00</td><td class="G">$0.00</td><td class="G">0.00 %</td></tr>
<tr><td class="l">Staff Income</td><td class="n">$0.00</td><td>$0.00</td><td class="G">$0.00</td><td class="G">0.00 %</td><td class="n">$0.00</td><td>$0.00</td><td class="G">$0.00</td><td class="G">0.00 %</td></tr>
<tr><td class="l">Travel Income</td><td class="n">$0.00</td><td>$0.00</td><td class="G">$0.00</td><td class="G">0.00 %</td><td class="n">$0.00</td><td>$0.00</td><td class="G">$0.00</td><td class="G">0.00 %</td></tr>
<tr><td class="l">Venue Income</td><td class="n"></td><td>$0.00</td><td class="R">($500,000.00)</td><td class="R">-100.00 %</td><td class="n">$0.00</td><td>$0.00</td><td class="G">$0.00</td><td class="G">0.00 %</td></tr>
<tr><td class="l" colspan="2">Income Total</td><td class="n s">$1,405,525.00</td><td class="s">$0.00</td><td class="RT">($1,405,525.00)</td><td class="RT">-100.00 %</td><td class="n s">$0.00</td><td class="s">$0.00</td><td class="GT">$0.00</td><td class="GT">0.00 %</td></tr>
<tr><td class="l" colspan="3">Income Total</td><td class="n s">$1,405,525.00</td><td class="s">$0.00</td><td class="RT">($1,405,525.00)</td><td class="RT">-100.00 %</td><td class="n s">$0.00</td><td class="s">$0.00</td><td class="GT">$0.00</td><td class="GT">0.00 %</td></tr>
<tr><td class="big" rowspan="3" style="padding-left:21px">Expense</td><td class="big" rowspan="3" style="padding-left:21px">Expense</td><td class="l">Accomm Expense</td><td class="n">$125,000.00</td><td>$0.00</td><td class="G">($125,000.00)</td><td class="G">-100.00 %</td><td class="n">$0.00</td><td>$0.00</td><td class="R">$0.00</td><td class="R">0.00 %</td></tr>
<tr><td class="l">Att Reg Expense</td><td class="n">$0.00</td><td>$0.00</td><td class="R">$0.00</td><td class="R">0.00 %</td><td class="n">$0.00</td><td>$0.00</td><td class="R">$0.00</td><td class="R">0.00 %</td></tr>
<tr><td class="l">Beverage Expense</td><td class="n">$0.00</td><td>$0.00</td><td class="R">$0.00</td><td class="R">0.00 %</td><td class="n">$0.00</td><td>$0.00</td><td class="R">$0.00</td><td class="R">0.00 %</td></tr>
</table></div>
<svg style="left:302px;top:791px;color:#8e929e" width="7" height="4"><use href="#dd"/></svg>
<svg style="left:379px;top:791px;color:#8e929e" width="7" height="4"><use href="#dd"/></svg>
<div style="left:708px;top:726px;width:1px;height:12px;background:#000"></div>
<div style="left:296px;top:838px;width:318px;height:18px;background:#e9ebef;border-top:1px solid #d3d5da;border-right:1px solid #d3d5da"></div>
<svg style="left:1404px;top:448px;color:#8e929e;transform:rotate(180deg)" width="7" height="4"><use href="#dd"/></svg>
<svg style="left:1404px;top:828px;color:#8e929e" width="7" height="4"><use href="#dd"/></svg>
<div style="left:1404px;top:476px;width:7px;height:178px;background:#e2e4e9;border:1px solid #b9bcc5;border-radius:4px"></div>
<svg style="left:620px;top:844px" width="5" height="7"><path d="M4.500 0v7L0 3.500z" fill="#8e929e"/></svg>
<svg style="left:1388px;top:844px" width="5" height="7"><path d="M0 0v7l4.500-3.500z" fill="#8e929e"/></svg>
<div style="left:631px;top:844px;width:645px;height:7px;background:#e2e4e9;border:1px solid #b9bcc5;border-radius:4px"></div>
<div style="left:1399px;top:838px;width:18px;height:18px;background:#e9ebef"></div>

<!-- inner status -->
<div style="left:281px;top:876px;width:1155px;height:27px;background:linear-gradient(#e9ebef,#c8cad0);border-top:1px solid #cfd1d7"></div>
<div class="t" style="left:288px;top:883px">User: AliceK</div>
<svg style="left:1421px;top:888px" width="12" height="12"><path d="M1 11L11 1M5 11l6-6M9 11l2-2" stroke="#8e929e" fill="none"/></svg>

<!-- red arrow -->
<svg style="left:450px;top:640px" width="190" height="100"><path d="M8 9L152 76" stroke="#f00" stroke-width="3.500" fill="none"/><path d="M147 85L181 88 160 63z" fill="#f00"/></svg>
</body></html>
